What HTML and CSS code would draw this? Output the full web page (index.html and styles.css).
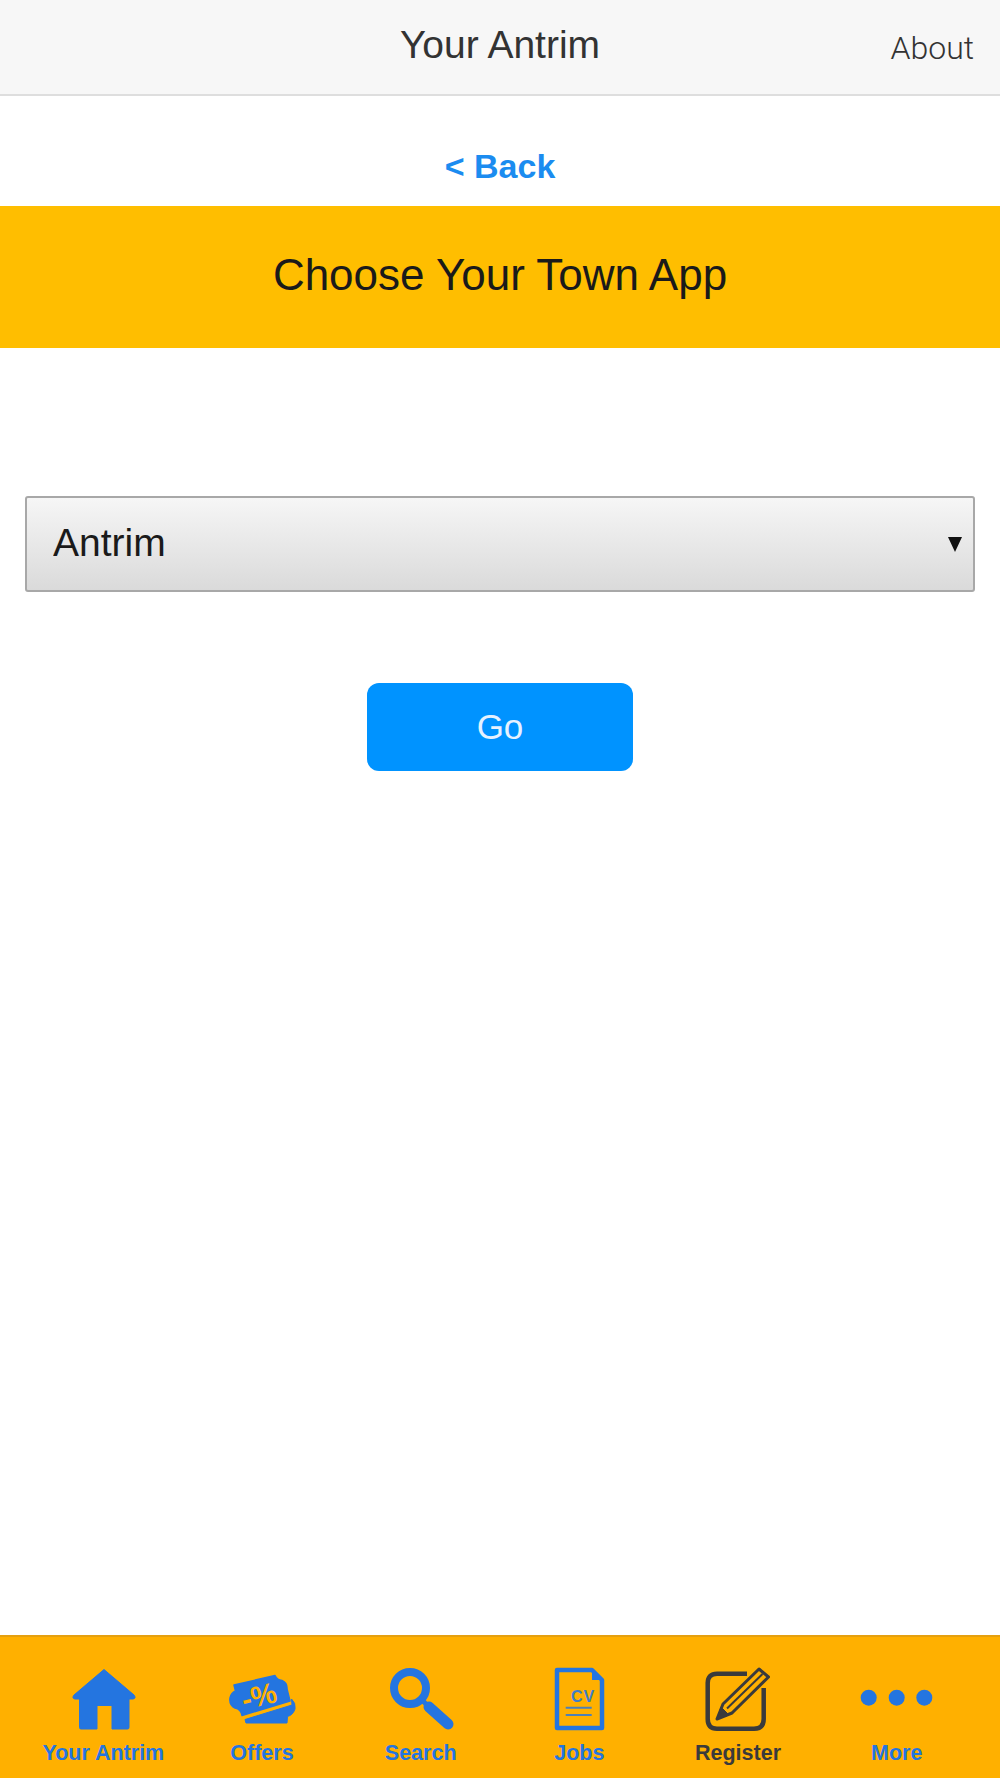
FILE: index.html
```html
<!doctype html>
<html lang="en">
<head>
  <meta charset="utf-8">
  <title>Your Antrim</title>
  <link rel="stylesheet" href="styles.css">
</head>
<body>
  <div class="page">
    <header class="topBar">
      <div class="topTitle">Your Antrim</div>
      <a class="topLink" href="#">About</a>
    </header>

    <div class="backRow"><a href="#">&lt; Back</a></div>
    <h1 class="banner">Choose Your Town App</h1>

    <form class="townForm">
      <div class="selectWrap">
        <select class="townSelect">
          <option>Antrim</option>
        </select>
      </div>
      <button class="goButton" type="button">Go</button>
    </form>

    <nav class="tabBar">
      <a class="tab" href="#">
        <svg class="tabIcon" viewBox="0 0 80 66">
          <path d="M41 3.500 L71 29 Q73.500 32.500 70 33 L66 33 V61.500 Q66 63 64.500 63 H49 V39.500 H34 V63 H18 Q16.500 63 16.500 61.500 V33 L12 33 Q8.500 32.500 11 29 Z" fill="#2475e0" stroke="#2475e0" stroke-width="1" stroke-linejoin="round"/>
        </svg>
        <span>Your Antrim</span>
      </a>
      <a class="tab" href="#">
        <svg class="tabIcon" viewBox="0 0 80 66">
          <path d="M12 19 L53 9.500 Q55 14 60 14.500 Q65.500 17 65 23 L68 35 L20 49.500 Q19 43 13 42 Q7 39 8 32 Q9 27 13.500 25 Z" fill="#2475e0" stroke="#2475e0" stroke-width="1.500" stroke-linejoin="round"/>
          <path d="M23 53.500 L70 39 L69.500 33 Q74 37 73 43 Q71 49 65.500 50.500 L65 57 L24 57 Z" fill="#2475e0" stroke="#2475e0" stroke-linejoin="round"/>
          <text class="ticketText" x="37" y="40" transform="rotate(-14 37 30)" text-anchor="middle">-%</text>
        </svg>
        <span>Offers</span>
      </a>
      <a class="tab" href="#">
        <svg class="tabIcon" viewBox="0 0 80 66">
          <circle cx="29" cy="22" r="16" fill="none" stroke="#2475e0" stroke-width="8"/>
          <path d="M41 34 L48 41" stroke="#2475e0" stroke-width="5"/>
          <path d="M48 41 L67 58" stroke="#2475e0" stroke-width="11" stroke-linecap="round"/>
        </svg>
        <span>Search</span>
      </a>
      <a class="tab" href="#">
        <svg class="tabIcon" viewBox="0 0 80 66">
          <path d="M18 4 H53 L63 14 V62 H18 Z" fill="none" stroke="#2475e0" stroke-width="4.500" stroke-linejoin="round"/>
          <path d="M53 3 L64 14 H53 Z" fill="#2475e0"/>
          <text class="cvText" x="44" y="35.700" text-anchor="middle">CV</text>
          <path d="M26.700 41.700 H52.700 M26.700 49 H52.700" stroke="#4d80b8" stroke-width="2"/>
        </svg>
        <span>Jobs</span>
      </a>
      <a class="tab tabActive" href="#">
        <svg class="tabIcon" viewBox="0 0 80 66">
          <path d="M49 7.700 H19 Q9.700 7.700 9.700 17 V53 Q9.700 62.700 19 62.700 H56 Q65.700 62.700 65.700 53 V22" fill="none" stroke="#3a3a3c" stroke-width="4.500"/>
          <path d="M25 38 L61 3 L70.500 11 L34 47 L19 53 Z" fill="none" stroke="#3a3a3c" stroke-width="3" stroke-linejoin="round"/>
          <path d="M19 53 L23 41 L31 49 Z" fill="#3a3a3c" stroke="#3a3a3c" stroke-linejoin="round"/>
          <path d="M29 42.500 L64.500 8" stroke="#3a3a3c" stroke-width="2"/>
        </svg>
        <span>Register</span>
      </a>
      <a class="tab" href="#">
        <svg class="tabIcon" viewBox="0 0 80 66">
          <circle cx="11.700" cy="31.700" r="8" fill="#2475e0"/>
          <circle cx="39.700" cy="31.700" r="8" fill="#2475e0"/>
          <circle cx="67.300" cy="31.700" r="8" fill="#2475e0"/>
        </svg>
        <span>More</span>
      </a>
    </nav>
  </div>
</body>
</html>
```

FILE: styles.css
```css
html, body {
  margin: 0;
  padding: 0;
}
body {
  background: #fff;
  font-family: "Liberation Sans", Arial, sans-serif;
}
.page {
  height: 1778px;
  display: flex;
  flex-direction: column;
  overflow: hidden;
}
.topBar {
  height: 94px;
  flex: none;
  display: flex;
  align-items: center;
  justify-content: center;
  position: relative;
  background: #f7f7f7;
  border-bottom: 2px solid #dedede;
}
.topTitle {
  font-size: 39px;
  color: #333;
  padding-bottom: 5px;
}
.topLink {
  position: absolute;
  right: 26px;
  top: 29px;
  font-family: Roboto, sans-serif;
  font-weight: 300;
  font-size: 32px;
  color: #333;
  text-decoration: none;
}
.backRow {
  height: 110px;
  flex: none;
  box-sizing: border-box;
  padding-top: 51px;
  text-align: center;
  font-size: 34px;
  line-height: 39px;
  font-weight: bold;
}
.backRow a {
  color: #1b8cf0;
  text-decoration: none;
}
.banner {
  margin: 0;
  height: 142px;
  flex: none;
  display: flex;
  align-items: center;
  justify-content: center;
  background: #ffbe00;
  color: #1a1a1a;
  font-size: 44px;
  font-weight: normal;
  padding-bottom: 4px;
  box-sizing: border-box;
}
.townForm {
  flex: 1;
  display: flex;
  flex-direction: column;
  align-items: center;
  padding: 148px 25px 0;
}
.selectWrap {
  width: 100%;
  position: relative;
}
.selectWrap::after {
  content: "";
  position: absolute;
  right: 13px;
  top: 41px;
  border-left: 7px solid transparent;
  border-right: 7px solid transparent;
  border-top: 15px solid #111;
}
.townSelect {
  display: block;
  width: 100%;
  height: 96px;
  box-sizing: border-box;
  padding: 0 0 4px 26px;
  appearance: none;
  -webkit-appearance: none;
  border: 2px solid #a8a8a8;
  border-radius: 3px;
  background: linear-gradient(#f6f6f6, #dadada);
  color: #1a1a1a;
  font-family: "Liberation Sans", Arial, sans-serif;
  font-size: 39px;
}
.goButton {
  margin-top: 91px;
  width: 266px;
  height: 88px;
  border: 0;
  border-radius: 12px;
  background: #0093ff;
  color: #e6f2ff;
  font-family: "Liberation Sans", Arial, sans-serif;
  font-size: 35px;
}
.tabBar {
  height: 143px;
  flex: none;
  box-sizing: border-box;
  display: grid;
  grid-template-columns: repeat(6, 1fr);
  padding: 0 24px;
  background: #ffb000;
  border-top: 2px solid #e5a00f;
}
.tab {
  display: flex;
  flex-direction: column;
  align-items: center;
  padding-top: 29px;
  color: #2475e0;
  font-size: 21.500px;
  font-weight: bold;
  text-decoration: none;
}
.tab span {
  margin-top: 6px;
  line-height: 30px;
  white-space: nowrap;
}
.tabActive {
  color: #3a3a3c;
}
.tabIcon {
  width: 80px;
  height: 66px;
  display: block;
  overflow: visible;
}
.ticketText {
  font-size: 29px;
  fill: #ffb000;
}
.cvText {
  font-size: 16px;
  font-weight: bold;
  letter-spacing: 1px;
  fill: #3f7ec8;
}
```
